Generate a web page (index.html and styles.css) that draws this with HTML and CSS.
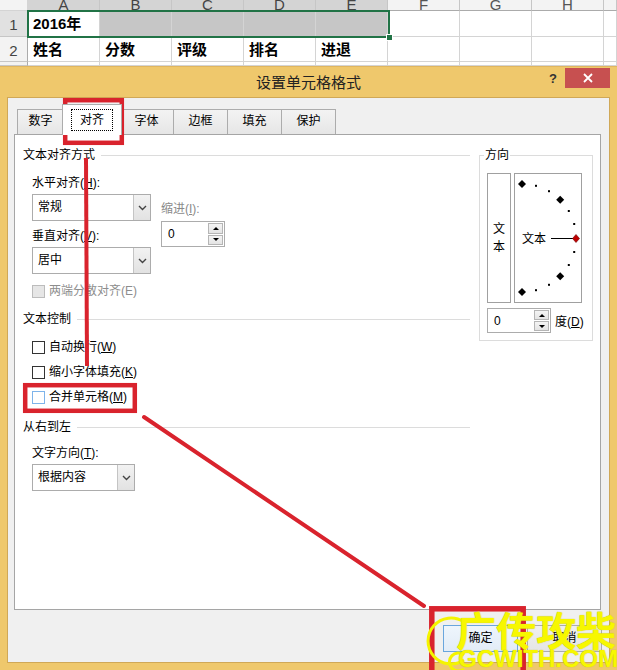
FILE: index.html
```html
<!DOCTYPE html>
<html lang="zh-CN">
<head>
  <meta charset="UTF-8">
  <meta name="viewport" content="width=device-width, initial-scale=1.0">
  <title>设置单元格格式</title>
  <link rel="stylesheet" href="styles.css">
</head>
<body>

<!-- 工作表 -->
<div class="sheet">
  <div class="grid">
    <div class="corner"></div>
    <div class="colhead sel">A</div>
    <div class="colhead sel">B</div>
    <div class="colhead sel">C</div>
    <div class="colhead sel">D</div>
    <div class="colhead sel">E</div>
    <div class="colhead">F</div>
    <div class="colhead">G</div>
    <div class="colhead">H</div>
    <div class="colhead"></div>

    <div class="rowhead sel">1</div>
    <div class="cell">2016年</div>
    <div class="cell shade"></div>
    <div class="cell shade"></div>
    <div class="cell shade"></div>
    <div class="cell shade"></div>
    <div class="cell"></div>
    <div class="cell"></div>
    <div class="cell"></div>
    <div class="cell"></div>

    <div class="rowhead">2</div>
    <div class="cell">姓名</div>
    <div class="cell">分数</div>
    <div class="cell">评级</div>
    <div class="cell">排名</div>
    <div class="cell">进退</div>
    <div class="cell"></div>
    <div class="cell"></div>
    <div class="cell"></div>
    <div class="cell"></div>

    <div class="rowhead"></div>
    <div class="cell"></div>
    <div class="cell"></div>
    <div class="cell"></div>
    <div class="cell"></div>
    <div class="cell"></div>
    <div class="cell"></div>
    <div class="cell"></div>
    <div class="cell"></div>
    <div class="cell"></div>
  </div>
  <div class="selbox"><span class="handle"></span></div>
</div>

<!-- 对话框 -->
<div class="dialog">
  <div class="titlebar">
    <div class="title">设置单元格格式</div>
    <div class="help">?</div>
    <div class="close">
      <svg width="10" height="10" viewBox="0 0 10 10"><path d="M1 1 L9 9 M9 1 L1 9" stroke="#fff" stroke-width="1.8"/></svg>
    </div>
  </div>

  <div class="client">
    <div class="tabs">
      <div class="tab first">数字</div>
      <div class="tab active"><span class="focus">对齐</span></div>
      <div class="tab">字体</div>
      <div class="tab">边框</div>
      <div class="tab">填充</div>
      <div class="tab">保护</div>
    </div>

    <div class="panel">
      <div class="main">
        <div class="group-head"><span>文本对齐方式</span><i class="rule"></i></div>

        <div class="align-block">
          <div class="col1">
            <div class="label">水平对齐(<u>H</u>):</div>
            <div class="combo"><span class="val">常规</span><span class="drop"><svg width="9" height="6" viewBox="0 0 9 6"><path d="M1 1 L4.5 4.5 L8 1" fill="none" stroke="#444" stroke-width="1.4"/></svg></span></div>
            <div class="label gap7">垂直对齐(<u>V</u>):</div>
            <div class="combo"><span class="val">居中</span><span class="drop"><svg width="9" height="6" viewBox="0 0 9 6"><path d="M1 1 L4.5 4.5 L8 1" fill="none" stroke="#444" stroke-width="1.4"/></svg></span></div>
          </div>
          <div class="col2">
            <div class="label dim">缩进(<u>I</u>):</div>
            <div class="spin">
              <span class="val">0</span>
              <span class="arrows"><b class="up"></b><b class="down"></b></span>
            </div>
          </div>
        </div>

        <div class="check disabled first-check"><span class="box"></span><span>两端分散对齐(E)</span></div>

        <div class="group-head mt12"><span>文本控制</span><i class="rule"></i></div>
        <div class="check mt12"><span class="box"></span><span>自动换行(<u>W</u>)</span></div>
        <div class="check mt9"><span class="box"></span><span>缩小字体填充(<u>K</u>)</span></div>
        <div class="check mt9"><span class="box hover"></span><span>合并单元格(<u>M</u>)</span></div>

        <div class="group-head mt14"><span>从右到左</span><i class="rule"></i></div>
        <div class="label indent mt10">文字方向(<u>T</u>):</div>
        <div class="combo narrow indent-box"><span class="val">根据内容</span><span class="drop"><svg width="9" height="6" viewBox="0 0 9 6"><path d="M1 1 L4.5 4.5 L8 1" fill="none" stroke="#444" stroke-width="1.4"/></svg></span></div>
      </div>

      <div class="orient">
        <span class="orient-title">方向</span>
        <div class="dial-row">
          <div class="vtext"><span>文</span><span>本</span></div>
          <div class="dial">
            <svg width="66" height="128" viewBox="0 0 66 128">
              <g fill="#000">
                <polygon points="7,6 11,10 7,14 3,10"/>
                <rect x="20" y="10.8" width="2" height="2"/>
                <rect x="33" y="16.2" width="2" height="2"/>
                <polygon points="45.2,21.8 49.2,25.8 45.2,29.8 41.2,25.8"/>
                <rect x="52.8" y="36" width="2" height="2"/>
                <rect x="58.2" y="49" width="2" height="2"/>
                <rect x="58.2" y="77" width="2" height="2"/>
                <rect x="52.8" y="90" width="2" height="2"/>
                <polygon points="45.2,98.2 49.2,102.2 45.2,106.2 41.2,102.2"/>
                <rect x="33" y="109.8" width="2" height="2"/>
                <rect x="20" y="115.2" width="2" height="2"/>
                <polygon points="7,114 11,118 7,122 3,118"/>
              </g>
              <text x="7" y="68.5" font-size="12" font-family="Noto Sans CJK SC, sans-serif">文本</text>
              <line x1="36" y1="64.5" x2="58" y2="64.5" stroke="#000" stroke-width="1"/>
              <polygon points="61,60.5 64.5,64.5 61,68.5 57.5,64.5" fill="#c00000" stroke="#6a0000" stroke-width="0.6"/>
            </svg>
          </div>
        </div>
        <div class="deg-row">
          <div class="spin small">
            <span class="val">0</span>
            <span class="arrows"><b class="up"></b><b class="down"></b></span>
          </div>
          <span class="deg">度(<u>D</u>)</span>
        </div>
      </div>
    </div>

    <div class="buttons">
      <div class="btn default">确定</div>
      <div class="btn">取消</div>
    </div>
  </div>
</div>

<!-- 标注 -->
<svg class="marks" width="617" height="670" viewBox="0 0 617 670">
  <g fill="none" stroke="#d9232d">
    <rect x="65.2" y="100.2" width="56.6" height="42.6" stroke-width="4.5"/>
    <line x1="86" y1="158" x2="87" y2="366" stroke-width="4"/>
    <rect x="25.2" y="385.2" width="109.6" height="25.6" stroke-width="4.5"/>
    <line x1="144" y1="417" x2="424" y2="606" stroke-width="4" stroke-linecap="round"/>
    <rect x="431.8" y="608.8" width="91.4" height="70" stroke-width="5.5"/>
  </g>
</svg>

<!-- 水印 -->
<div class="watermark">
  <svg class="wm-logo" width="60" height="62" viewBox="0 0 60 62">
    <path d="M44 12 A23 23 0 1 0 44 50" fill="none" stroke="#f4f400" stroke-width="3"/>
    <path d="M44 45 A9 9 0 1 0 44 59" fill="none" stroke="#f4f400" stroke-width="3"/>
  </svg>
  <div class="wm-cn">广传攻柴</div>
  <div class="wm-en">GCWITH.COM</div>
</div>

</body>
</html>
```

FILE: styles.css
```css
* {
  box-sizing: border-box;
}

body {
  margin: 0;
  width: 617px;
  height: 670px;
  overflow: hidden;
  position: relative;
  font-family: "Liberation Sans", "Noto Sans CJK SC", sans-serif;
  font-size: 12px;
  color: #000;
  background: #fff;
}

u {
  text-decoration: underline;
  text-underline-offset: 1px;
}

/* 工作表 */
.sheet {
  position: relative;
  height: 66px;
  overflow: hidden;
}

.grid {
  display: grid;
  grid-template-columns: 28px repeat(8, 72px) 1fr;
  grid-template-rows: 11px 26px 25px 4px;
}

.grid > div {
  border-right: 1px solid #d4d4d4;
  border-bottom: 1px solid #d4d4d4;
  overflow: hidden;
}

.corner {
  background: #f3f3f3;
}

.colhead {
  background: #f3f3f3;
  color: #555;
  font-size: 15px;
  line-height: 9px;
  text-align: center;
}

.grid > .colhead {
  border-right-color: #c6c6c6;
  border-bottom-color: #ababab;
}

.colhead.sel {
  background: #d4d4d4;
  color: #444;
}

.rowhead {
  background: #f3f3f3;
  color: #444;
  font-size: 15px;
  line-height: 27px;
  text-align: center;
}

.grid > .rowhead {
  border-right-color: #ababab;
  border-bottom-color: #c6c6c6;
}

.rowhead.sel {
  background: #e1e1e1;
}

.cell {
  padding-left: 5px;
  font-size: 15px;
  font-weight: bold;
  line-height: 25px;
  background: #fff;
}

.cell.shade {
  background: #c6c6c6;
}

.selbox {
  position: absolute;
  left: 27px;
  top: 10px;
  width: 363px;
  height: 28px;
  border: 2px solid #217346;
}

.handle {
  position: absolute;
  right: -5px;
  bottom: -5px;
  width: 7px;
  height: 7px;
  background: #217346;
  border: 1px solid #fff;
}

/* 对话框 */
.dialog {
  height: 604px;
  padding: 0 7px 8px 7px;
  background: #efc86c;
  border-top: 1px solid #e0b660;
}

.titlebar {
  position: relative;
  height: 30px;
}

.title {
  text-align: center;
  font-size: 15px;
  line-height: 30px;
  padding-top: 1px;
  color: #222;
}

.help {
  position: absolute;
  left: 542px;
  top: 4px;
  font-weight: bold;
  font-size: 13px;
  color: #333;
}

.close {
  position: absolute;
  right: 0;
  top: 1px;
  width: 45px;
  height: 20px;
  background: #c75050;
  display: flex;
  align-items: center;
  justify-content: center;
}

.client {
  height: 566px;
  background: #f0f0f0;
  border: 1px solid #d0a857;
  padding: 6px 8px 0 6px;
}

.tabs {
  display: flex;
  align-items: flex-end;
  height: 30px;
  padding-left: 3px;
}

.tab {
  width: 54px;
  height: 25px;
  border: 1px solid #acacac;
  border-bottom: none;
  background: linear-gradient(#f3f3f3, #e6e6e6);
  text-align: center;
  line-height: 23px;
}

.tab + .tab {
  border-left: none;
}

.tab.first {
  width: 47px;
}

.tab.active {
  position: relative;
  z-index: 2;
  width: 60px;
  height: 31px;
  margin: 0 -2px -1px -2px;
  background: #fff;
  border-left: 1px solid #acacac;
  padding-top: 5px;
  line-height: 20px;
}

.focus {
  display: inline-block;
  padding: 0 8px;
  outline: 1px dotted #000;
}

.panel {
  height: 476px;
  background: #fff;
  border: 1px solid #a5a5a5;
  display: flex;
  gap: 9px;
  padding: 12px 7px 0 8px;
}

.main {
  flex: 1;
}

.group-head {
  display: flex;
  align-items: center;
  line-height: 16px;
}

.rule {
  flex: 1;
  margin-left: 6px;
  border-top: 1px solid #dcdcdc;
}

.label {
  line-height: 16px;
}

.dim {
  color: #8a8a8a;
}

.indent {
  padding-left: 9px;
}

.align-block {
  display: flex;
  gap: 10px;
  margin-top: 12px;
  padding-left: 9px;
}

.col1 {
  width: 119px;
}

.col1 .combo {
  margin-top: 3px;
}

.col1 .gap7 {
  margin-top: 7px;
}

.col2 {
  padding-top: 26px;
}

.col2 .spin {
  margin-top: 4px;
}

.combo {
  display: flex;
  height: 27px;
  background: #fff;
  border: 1px solid #acacac;
}

.combo .val {
  flex: 1;
  padding-left: 5px;
  line-height: 25px;
}

.combo .drop {
  width: 17px;
  border-left: 1px solid #c4c4c4;
  background: linear-gradient(#f2f2f2, #e2e2e2);
  display: flex;
  align-items: center;
  justify-content: center;
}

.combo.narrow {
  width: 103px;
}

.indent-box {
  margin: 3px 0 0 9px;
}

.spin {
  display: flex;
  width: 64px;
  height: 26px;
  background: #fff;
  border: 1px solid #acacac;
  padding: 1px;
}

.spin .val {
  flex: 1;
  padding-left: 5px;
  line-height: 22px;
}

.arrows {
  width: 15px;
  display: flex;
  flex-direction: column;
  gap: 1px;
}

.arrows b {
  flex: 1;
  border: 1px solid #b5b5b5;
  background: linear-gradient(#f4f4f4, #e4e4e4);
  display: flex;
  align-items: center;
  justify-content: center;
}

.arrows b::after {
  content: "";
  border-left: 3px solid transparent;
  border-right: 3px solid transparent;
}

.arrows .up::after {
  border-bottom: 3px solid #000;
}

.arrows .down::after {
  border-top: 3px solid #000;
}

.check {
  display: flex;
  align-items: center;
  gap: 4px;
  padding-left: 9px;
  line-height: 16px;
}

.box {
  width: 13px;
  height: 13px;
  border: 1px solid #333;
  background: #fff;
}

.box.hover {
  border-color: #7eb4ea;
}

.check.disabled {
  color: #8d8d8d;
}

.check.disabled .box {
  border-color: #bcbcbc;
  background: #e6e6e6;
}

.first-check {
  margin-top: 9px;
}

.mt9 { margin-top: 9px; }
.mt10 { margin-top: 10px; }
.mt12 { margin-top: 12px; }
.mt14 { margin-top: 14px; }

/* 方向 */
.orient {
  width: 114px;
  height: 186px;
  margin-top: 8px;
  border: 1px solid #dcdcdc;
  padding-left: 7px;
}

.orient-title {
  display: block;
  width: fit-content;
  margin: -9px 0 0 -3px;
  padding: 0 1px;
  background: #fff;
  line-height: 16px;
}

.dial-row {
  display: flex;
  gap: 3px;
  margin-top: 10px;
}

.vtext {
  width: 24px;
  height: 130px;
  border: 1px solid #a0a0a0;
  display: flex;
  flex-direction: column;
  align-items: center;
  justify-content: center;
  line-height: 18px;
}

.dial {
  width: 68px;
  height: 130px;
  border: 1px solid #a0a0a0;
}

.dial svg {
  display: block;
}

.deg-row {
  display: flex;
  align-items: center;
  gap: 4px;
  margin-top: 5px;
}

.spin.small {
  height: 25px;
}

/* 按钮 */
.buttons {
  display: flex;
  justify-content: flex-end;
  gap: 9px;
  margin: 15px -1px 0 0;
}

.btn {
  width: 75px;
  height: 27px;
  border: 1px solid #acacac;
  background: linear-gradient(#f0f0f0, #e5e5e5);
  text-align: center;
  line-height: 25px;
}

.btn.default {
  border-color: #6aa6dd;
  background: linear-gradient(#eef5fc, #e2ecf7);
}

/* 标注与水印 */
.marks {
  position: absolute;
  left: 0;
  top: 0;
  pointer-events: none;
}

.watermark {
  position: absolute;
  left: 418px;
  top: 606px;
  width: 199px;
  height: 64px;
  overflow: hidden;
  pointer-events: none;
}

.wm-logo {
  position: absolute;
  left: 2px;
  top: 4px;
}

.wm-cn {
  position: absolute;
  left: 38px;
  top: 0;
  font-family: "Noto Sans CJK SC", sans-serif;
  font-size: 40px;
  font-weight: bold;
  line-height: 46px;
  color: #f7f700;
  text-shadow: 0 0 1px #b8b800;
}

.wm-en {
  position: absolute;
  left: 40px;
  top: 40px;
  font-size: 24px;
  font-weight: bold;
  line-height: 26px;
  color: #f7f700;
  text-shadow: 0 0 1px #b8b800;
}
```
